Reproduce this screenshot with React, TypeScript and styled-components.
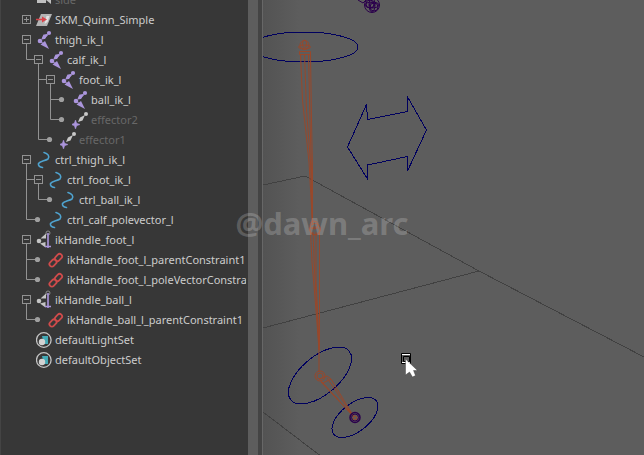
import React, { useState } from "react";
import styled, { createGlobalStyle } from "styled-components";

const GlobalStyle = createGlobalStyle`
  * { box-sizing: border-box; }
  body { margin: 0; background: #5d5d5d; font-family: "Noto Sans", "Open Sans", sans-serif; overflow: hidden; }
`;

type Kind = "camera" | "mesh" | "joint" | "effector" | "curve" | "ik" | "link" | "set";

interface TreeNode {
  name: string;
  kind: Kind;
  dim?: boolean;
  children?: TreeNode[];
}

const scene: TreeNode[] = [
  { name: "side", kind: "camera", dim: true },
  { name: "SKM_Quinn_Simple", kind: "mesh", children: [] },
  {
    name: "thigh_ik_l",
    kind: "joint",
    children: [
      {
        name: "calf_ik_l",
        kind: "joint",
        children: [
          {
            name: "foot_ik_l",
            kind: "joint",
            children: [
              { name: "ball_ik_l", kind: "joint" },
              { name: "effector2", kind: "effector", dim: true },
            ],
          },
          { name: "effector1", kind: "effector", dim: true },
        ],
      },
    ],
  },
  {
    name: "ctrl_thigh_ik_l",
    kind: "curve",
    children: [
      { name: "ctrl_foot_ik_l", kind: "curve", children: [{ name: "ctrl_ball_ik_l", kind: "curve" }] },
      { name: "ctrl_calf_polevector_l", kind: "curve" },
    ],
  },
  {
    name: "ikHandle_foot_l",
    kind: "ik",
    children: [
      { name: "ikHandle_foot_l_parentConstraint1", kind: "link" },
      { name: "ikHandle_foot_l_poleVectorConstraint1", kind: "link" },
    ],
  },
  {
    name: "ikHandle_ball_l",
    kind: "ik",
    children: [{ name: "ikHandle_ball_l_parentConstraint1", kind: "link" }],
  },
  { name: "defaultLightSet", kind: "set" },
  { name: "defaultObjectSet", kind: "set" },
];

const Workspace = styled.main`
  position: relative;
  display: flex;
  height: 100vh;
  overflow: hidden;
`;

const Outliner = styled.nav`
  flex: 0 0 248px;
  padding-right: 2px;
  overflow: hidden;
  background: #373737;
  border-left: 1px solid #444444;
`;

const Tree = styled.ul`
  margin: -10px 0 0;
  padding: 0 0 0 19px;
  list-style: none;
  overflow: hidden;
`;

const Row = styled.li`
  display: flex;
  align-items: center;
  height: 20px;
  white-space: nowrap;
`;

const Cell = styled.span`
  flex: 0 0 12px;
  height: 20px;
  svg { display: block; }
`;

const Toggle = styled.button`
  display: block;
  width: 12px;
  height: 20px;
  padding: 0;
  border: 0;
  background: none;
`;

const IconSlot = styled.span`
  flex: 0 0 16px;
  height: 20px;
  margin: 0 3px 0 4px;
  svg { display: block; }
`;

const Label = styled.span<{ $dim?: boolean }>`
  font-size: 11px;
  line-height: 20px;
  color: ${(p) => (p.$dim ? "#686868" : "#cccccc")};
`;

const Scrollbar = styled.div`
  flex: 0 0 10px;
  background: #5d5d5d;
`;

const Splitter = styled.div`
  flex: 0 0 4px;
  background: #444444;
`;

const Viewport = styled.section`
  flex: 1;
  min-width: 0;
  overflow: hidden;
  border-left: 1px solid #676767;
  background: linear-gradient(90deg, #535353 0, #5d5d5d 36px);
  svg { display: block; }
`;

const Watermark = styled.div`
  position: absolute;
  inset: 0;
  display: flex;
  align-items: center;
  justify-content: center;
  padding-bottom: 10px;
  font-size: 31px;
  line-height: 40px;
  font-weight: 700;
  color: rgba(255, 255, 255, 0.2);
  pointer-events: none;
`;

const GUIDE = "#929292";

function Guide({ d }: { d: string }) {
  return (
    <Cell>
      <svg width="12" height="20" stroke={GUIDE} fill="none"><path d={d} /></svg>
    </Cell>
  );
}

function KindIcon({ kind }: { kind: Kind }) {
  const common = { width: 16, height: 20, viewBox: "0 0 16 20", "aria-hidden": true } as const;
  switch (kind) {
    case "camera":
      return (
        <svg {...common}><path d="M1 7h9v6H1zM10 10l5-4v8z" fill="#c0c0c0" /></svg>
      );
    case "mesh":
      return (
        <svg {...common}>
          <path d="M5 4h11l-5 12H0z" fill="#b4b4b4" />
          <path d="M10.500 6l3 0-2 6-3 2z" fill="#e2e2e2" />
          <path d="M0 9.500h7" stroke="#d8444a" strokeWidth="1.500" />
          <path d="M6 6.500l5 3-5 3z" fill="#d8444a" />
        </svg>
      );
    case "joint":
      return (
        <svg {...common} fill="#ab95dc">
          <circle cx="13" cy="3" r="2.100" />
          <path d="M12.500 4.500L7.500 4.500 6 9.500 8.500 9z" />
          <path d="M12 3.500L7 5.500 5.500 9 9 9z" />
          <circle cx="4" cy="11" r="2.300" />
          <path d="M4.500 14.500l8.500 4.500-4-8z" />
          <path d="M4 11l4 3" stroke="#ab95dc" />
        </svg>
      );
    case "effector":
      return (
        <svg {...common}>
          <circle cx="14" cy="4" r="2" fill="#c8c8c8" />
          <path d="M13 5L8 7.500 6 12 10.500 10.500z" fill="#c8c8c8" />
          <path d="M3.500 10l1.200 3.300L8 14.500l-3.300 1.200L3.500 19l-1.200-3.300L-1 14.500l3.300-1.200z" fill="#ab95dc" stroke="#ab95dc" strokeWidth=".5" overflow="visible" />
        </svg>
      );
    case "curve":
      return (
        <svg {...common} fill="none" stroke="#4fa3cf" strokeWidth="1.600" strokeLinecap="round">
          <path d="M8 2.500c4 1 6 4 4 6.500-3 2-8 2-9.500 4.500-.5 2 1 3.500 4 4" />
        </svg>
      );
    case "ik":
      return (
        <svg {...common}>
          <circle cx="12" cy="3" r="2" fill="none" stroke="#8c8c8c" />
          <path d="M4.500 8.500L10 3.500V8.500z" fill="#c4c4c4" />
          <circle cx="3" cy="11" r="2.300" fill="#c4c4c4" />
          <path d="M4 13.500L9.500 12v5.500z" fill="#c4c4c4" />
          <path d="M12 3v15M9 16.500h6" stroke="#ab95dc" strokeWidth="1.600" />
        </svg>
      );
    case "link":
      return (
        <svg {...common} fill="none" stroke="#cf4b4b" strokeWidth="1.800">
          <rect x="6.500" y="5" width="8" height="5" rx="2.500" transform="rotate(-45 10.500 7.500)" />
          <rect x="1" y="10.500" width="8" height="5" rx="2.500" transform="rotate(-45 5 13)" />
        </svg>
      );
    case "set":
      return (
        <svg {...common}>
          <circle cx="7.800" cy="10" r="7.300" fill="none" stroke="#c4c4c4" strokeWidth="1.300" />
          <path d="M6 6h6v8H8z" fill="#43a9b5" />
          <circle cx="6" cy="12" r="3.200" fill="#d2d2d2" />
        </svg>
      );
  }
}

interface FlatRow {
  node: TreeNode;
  path: string;
  depth: number;
  lines: boolean[];
  last: boolean;
}

function flatten(nodes: TreeNode[], closed: Set<string>, lines: boolean[] = [], base = "", depth = 0): FlatRow[] {
  return nodes.flatMap((node, i) => {
    const last = i === nodes.length - 1;
    const path = `${base}/${node.name}`;
    const row = { node, path, depth, lines, last };
    if (!node.children || closed.has(path)) return [row];
    const next = depth === 0 ? [] : [...lines, !last];
    return [row, ...flatten(node.children, closed, next, path, depth + 1)];
  });
}

function TreeRow({ row, closed, onToggle }: { row: FlatRow; closed: boolean; onToggle: () => void }) {
  const { node, lines, last, depth } = row;
  return (
    <Row>
      {lines.map((on, i) => <Guide key={i} d={on ? "M6.500 0V20" : ""} />)}
      {depth > 0 && <Guide d={last ? "M6.500 0V9.500H12" : "M6.500 0V20M6.500 9.500H12"} />}
      <Cell>
        {node.children ? (
          <Toggle aria-expanded={!closed} aria-label={`Toggle ${node.name}`} onClick={onToggle}>
            <svg width="12" height="20" fill="none" stroke={GUIDE}>
              <rect x="2.500" y="5.500" width="8" height="8" />
              <path d={closed ? "M4 9.500h5M6.500 7v5" : "M4 9.500h5M6.500 14v6"} />
              {depth > 0 && <path d="M0 9.500h2" />}
            </svg>
          </Toggle>
        ) : (
          depth > 0 && (
            <svg width="12" height="20">
              <path d="M0 9.500h5" stroke={GUIDE} />
              <circle cx="5.500" cy="9.500" r="2.600" fill="#a0a0a0" />
            </svg>
          )
        )}
      </Cell>
      <IconSlot><KindIcon kind={node.kind} /></IconSlot>
      <Label $dim={node.dim}>{node.name}</Label>
    </Row>
  );
}

function Scene() {
  return (
    <svg width="381" height="455" viewBox="263 0 381 455" fill="none" overflow="visible" shapeRendering="crispEdges" aria-label="Perspective view">
      <g stroke="#414141">
        <path d="M263 185L305 176L479 271L644 357" />
        <path d="M263 328L479 271" />
        <path d="M263 412L322 457" />
      </g>
      <g stroke="#00005f">
        <ellipse cx="304" cy="47" rx="54" ry="15" />
        <path d="M347.500 147L366.500 104.500L367.500 119.500L407.500 111.500L407 96L426.500 130L407.500 171V156.500L367.500 165V179Z" />
        <ellipse cx="320" cy="375.500" rx="38" ry="19" transform="rotate(-40 320 375.500)" />
        <ellipse cx="355" cy="417.500" rx="27" ry="14" transform="rotate(-38 355 417.500)" />
      </g>
      <g stroke="#2b004c" shapeRendering="auto">
        <circle cx="372" cy="5" r="7.500" />
        <circle cx="370" cy="4" r="4" />
        <circle cx="374" cy="7" r="4" />
        <circle cx="372" cy="5" r="2.500" />
        <ellipse cx="372" cy="5" rx="7" ry="3" />
        <ellipse cx="372" cy="5" rx="3" ry="7" />
        <path d="M358 0l5 3 3-3" />
      </g>
      <g stroke="#98482b" shapeRendering="auto">
        <circle cx="304.500" cy="45" r="4.500" />
        <ellipse cx="304.500" cy="47" rx="6" ry="2" />
        <ellipse cx="304.500" cy="44" rx="2" ry="4" />
        <path d="M299.500 51.500h11v3h-11z" />
        <path d="M300.500 54L302.500 100L309 162L312.500 225" />
        <path d="M304.500 54L306.500 110L310.500 162L312.500 225" />
        <path d="M308.500 54L310 120L311.500 170L312.500 225" />
        <path d="M310.500 54L311.500 120L312.500 170V225" />
        <circle cx="314" cy="225" r="4" />
        <ellipse cx="315" cy="231" rx="4.500" ry="4" />
        <circle cx="315" cy="229" r="5.500" />
        <path d="M310.500 232L312 262L316 310L319 350V372" />
        <path d="M313 232L314.500 270L317 310L319 350" />
        <path d="M316 232L316 280L318 320L319 350" />
        <path d="M319.500 232V350" />
        <circle cx="320" cy="376" r="5" />
        <circle cx="320" cy="376" r="3" />
        <path d="M319 379l4 4 31 34-23-38-4-3z" />
        <path d="M323 383l8-4M321 382l32 34M327 378l26 38" />
        <circle cx="355" cy="418" r="2" />
      </g>
      <g stroke="#2b004c" strokeWidth="1.500" shapeRendering="auto">
        <circle cx="355" cy="417.500" r="5" />
        <circle cx="355" cy="417.500" r="3.500" strokeWidth="1" />
      </g>
      <g shapeRendering="auto">
        <path d="M401.500 353.500h9v10h-9z" stroke="#000000" />
        <path d="M402 354.500h8M402 362.500h8" stroke="#ffffff" />
        <path d="M403.500 356.500h6v5h-6z" stroke="#000000" />
        <path d="M405.500 359v16l4-3 3 5 3-1.500-2-5h4z" fill="#ffffff" stroke="#333333" strokeWidth=".4" />
      </g>
    </svg>
  );
}

export default function App() {
  const [closed, setClosed] = useState<Set<string>>(new Set(["/SKM_Quinn_Simple"]));
  const toggle = (path: string) =>
    setClosed((old) => {
      const next = new Set(old);
      if (!next.delete(path)) next.add(path);
      return next;
    });
  return (
    <>
      <GlobalStyle />
      <Workspace>
        <Outliner aria-label="Outliner">
          <Tree>
            {flatten(scene, closed).map((row) => (
              <TreeRow key={row.path} row={row} closed={closed.has(row.path)} onToggle={() => toggle(row.path)} />
            ))}
          </Tree>
        </Outliner>
        <Scrollbar />
        <Splitter />
        <Viewport><Scene /></Viewport>
        <Watermark>@dawn_arc</Watermark>
      </Workspace>
    </>
  );
}
